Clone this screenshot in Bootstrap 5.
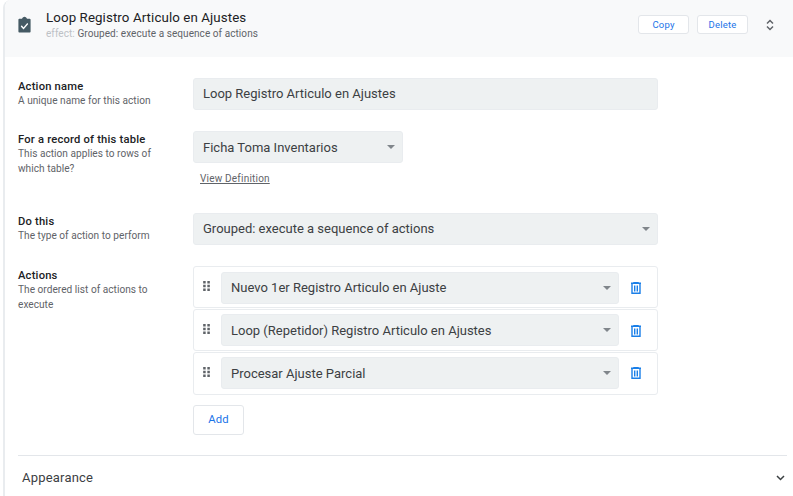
<!DOCTYPE html>
<html lang="es">
<head>
<meta charset="utf-8">
<title>Action editor</title>
<link href="https://cdn.jsdelivr.net/npm/bootstrap@5.3.0/dist/css/bootstrap.min.css" rel="stylesheet">
<style>
html,body{height:496px;overflow:hidden;background:#fff;}
body{font-family:Roboto,"Liberation Sans",sans-serif;color:#212529;}
.shell{margin-left:3px;border-left:2px solid #e9ecef;border-top-left-radius:8px;height:496px;overflow:hidden;}
.head{height:57px;background:#f8f9fa;padding-left:13px;padding-right:11px;}
.head-title{font-size:13.3px;line-height:18px;color:#202124;letter-spacing:.1px;}
.head-sub{font-size:10px;line-height:14px;color:#5f6368;letter-spacing:.07px;}
.head-sub span{color:#bdc1c6;}
.head-text{margin-left:15px;}
.mini-btn{width:51px;height:19px;font-size:9.5px;line-height:17px;padding:0;background:#fff;border:1px solid #e3e6ea;border-radius:3px;color:#1a73e8;letter-spacing:.2px;}
.chev{margin-left:18px;}
.form-area{padding:21px 0 0 13px;}
.f-row{display:flex;}
.f-second{margin-top:21px;height:82px;}
.f-third{height:53px;}
.f-fourth .f-label{padding-top:3px;}
.f-label{width:175px;flex:none;padding-top:2px;}
.f-name{font-size:11.2px;font-weight:500;line-height:14px;color:#202124;letter-spacing:.2px;}
.f-desc{font-size:10.1px;line-height:14.7px;color:#5f6368;letter-spacing:.03px;}
.fld{height:32px;background:#eef1f2;border:1px solid #e9ecef;border-radius:3px;font-size:13px;line-height:30px;padding:0 9px;color:#3c4043;letter-spacing:0;position:relative;}
.fld-sel::after{content:"";position:absolute;right:7px;top:13px;border-left:4px solid transparent;border-right:4px solid transparent;border-top:4px solid #80868b;}
.w-full{width:465px;}
.w-table{width:210px;line-height:32px;}
.view-def{display:block;margin:10px 0 0 7px;font-size:10px;line-height:12px;color:#5f6368;letter-spacing:.2px;text-decoration:underline;}
.act-list{width:465px;}
.act-item{height:42px;margin-bottom:1px;border:1px solid #e9ecef;border-radius:3px;display:flex;align-items:flex-start;padding:5px 0 0 9px;}
.act-item:last-child{height:43px;margin-bottom:0;}
.act-item+.act-item{padding-top:4px;}
.act-item+.act-item .fld{line-height:32px;}
.act-item .fld{width:398px;margin-left:11px;}
.act-item .grip{margin-top:9px;flex:none;}
.act-item .bin{margin:10px 0 0 12px;flex:none;}
.act-item+.act-item .grip{margin-top:10px;}
.act-item:nth-child(2) .bin{margin-top:11px;}
.add-btn{width:51px;height:30px;margin-top:10px;padding:0;font-size:11.3px;line-height:28px;background:#fff;border:1px solid #e3e6ea;border-radius:3px;color:#1a73e8;letter-spacing:.2px;}
.appear{margin:20px 6px 0 0;border-top:1px solid #e3e6ea;height:44px;padding-left:4px;padding-right:2px;font-size:13px;color:#3c4043;letter-spacing:.2px;}
</style>
</head>
<body>
<div class="shell">
  <div class="head d-flex align-items-center">
    <svg width="13" height="17" viewBox="0 0 16 18" preserveAspectRatio="none" class="flex-shrink-0 mb-2"><path d="M1.500 3H5c.3-1.300 1.500-2.300 3-2.300S10.700 1.700 11 3h3.500c.6 0 1 .4 1 1v12.500c0 .6-.4 1-1 1h-13c-.6 0-1-.4-1-1V4c0-.6.4-1 1-1z" fill="#455a64"/><path d="M4 10.500l2.800 2.700L12 8" fill="none" stroke="#fff" stroke-width="1.700"/></svg>
    <div class="head-text mb-2 flex-grow-1">
      <div class="head-title">Loop Registro Articulo en Ajustes</div>
      <div class="head-sub"><span>effect:</span> Grouped: execute a sequence of actions</div>
    </div>
    <button type="button" class="btn mini-btn mb-2">Copy</button>
    <button type="button" class="btn mini-btn mb-2 ms-2">Delete</button>
    <svg width="8" height="12" viewBox="0 0 8 12" class="chev mb-2 me-2 flex-shrink-0"><path d="M1 4.500l3-3 3 3M1 7.500l3 3 3-3" fill="none" stroke="#5f6368" stroke-width="1.500"/></svg>
  </div>
  <div class="form-area">
    <div class="f-row">
      <div class="f-label"><div class="f-name">Action name</div><div class="f-desc">A unique name for this action</div></div>
      <div class="fld w-full">Loop Registro Articulo en Ajustes</div>
    </div>
    <div class="f-row f-second">
      <div class="f-label"><div class="f-name">For a record of this table</div><div class="f-desc">This action applies to rows of<br>which table?</div></div>
      <div><div class="fld fld-sel w-table">Ficha Toma Inventarios</div><a class="view-def" href="#">View Definition</a></div>
    </div>
    <div class="f-row f-third">
      <div class="f-label"><div class="f-name">Do this</div><div class="f-desc">The type of action to perform</div></div>
      <div class="fld fld-sel w-full">Grouped: execute a sequence of actions</div>
    </div>
    <div class="f-row f-fourth">
      <div class="f-label"><div class="f-name">Actions</div><div class="f-desc">The ordered list of actions to<br>execute</div></div>
      <div>
        <div class="act-list">
          <div class="act-item"><svg class="grip" width="7" height="10" viewBox="0 0 8 12" fill="#5f6368"><rect x="0" y="0" width="3" height="3"/><rect x="5" y="0" width="3" height="3"/><rect x="0" y="4.500" width="3" height="3"/><rect x="5" y="4.500" width="3" height="3"/><rect x="0" y="9" width="3" height="3"/><rect x="5" y="9" width="3" height="3"/></svg><div class="fld fld-sel">Nuevo 1er Registro Articulo en Ajuste</div><svg class="bin" width="10" height="12" viewBox="0 0 10 12"><path d="M0 1.300h10M3 1.300V.5h4v.8M1 1.300v10h8v-10M3.700 3.500v6M6.300 3.500v6" fill="none" stroke="#1a7fe8" stroke-width="1.400"/></svg></div>
          <div class="act-item"><svg class="grip" width="7" height="10" viewBox="0 0 8 12" fill="#5f6368"><rect x="0" y="0" width="3" height="3"/><rect x="5" y="0" width="3" height="3"/><rect x="0" y="4.500" width="3" height="3"/><rect x="5" y="4.500" width="3" height="3"/><rect x="0" y="9" width="3" height="3"/><rect x="5" y="9" width="3" height="3"/></svg><div class="fld fld-sel">Loop (Repetidor) Registro Articulo en Ajustes</div><svg class="bin" width="10" height="12" viewBox="0 0 10 12"><path d="M0 1.300h10M3 1.300V.5h4v.8M1 1.300v10h8v-10M3.700 3.500v6M6.300 3.500v6" fill="none" stroke="#1a7fe8" stroke-width="1.400"/></svg></div>
          <div class="act-item"><svg class="grip" width="7" height="10" viewBox="0 0 8 12" fill="#5f6368"><rect x="0" y="0" width="3" height="3"/><rect x="5" y="0" width="3" height="3"/><rect x="0" y="4.500" width="3" height="3"/><rect x="5" y="4.500" width="3" height="3"/><rect x="0" y="9" width="3" height="3"/><rect x="5" y="9" width="3" height="3"/></svg><div class="fld fld-sel">Procesar Ajuste Parcial</div><svg class="bin" width="10" height="12" viewBox="0 0 10 12"><path d="M0 1.300h10M3 1.300V.5h4v.8M1 1.300v10h8v-10M3.700 3.500v6M6.300 3.500v6" fill="none" stroke="#1a7fe8" stroke-width="1.400"/></svg></div>
        </div>
        <button type="button" class="btn add-btn">Add</button>
      </div>
    </div>
    <div class="appear d-flex align-items-center justify-content-between">
      <span>Appearance</span>
      <svg width="9" height="6" viewBox="0 0 9 6"><path d="M1 1l3.500 3.500L8 1" fill="none" stroke="#3c4043" stroke-width="1.500"/></svg>
    </div>
  </div>
</div>
<script src="https://cdn.jsdelivr.net/npm/bootstrap@5.3.0/dist/js/bootstrap.bundle.min.js"></script>
</body>
</html>
